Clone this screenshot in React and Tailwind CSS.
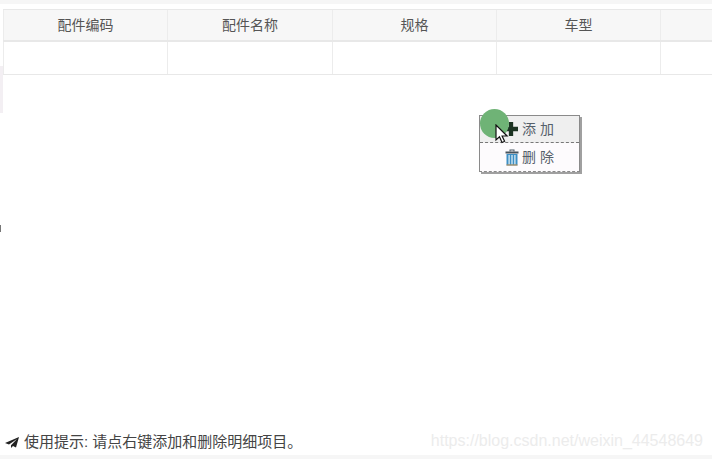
const columns = ["配件编码", "配件名称", "规格", "车型", ""];

function ContextMenu() {
  return (
    <div className="absolute left-[479px] top-[115px] w-[101px] h-[57px] border border-[#8a8a8a] [border-bottom-style:dashed] bg-[#fdfbfd] shadow-[2px_2px_0_#a0a0a0] text-[14px] text-[#55606a]">
      <div className="flex items-center h-[27px] pl-[24px] bg-[#efefef] border-b border-dashed border-[#777]">
        <svg className="w-[14px] h-[14px] mr-[4px]" viewBox="0 0 13 13">
          <path d="M4.500 0h4v4.500H13v4H8.500V13h-4V8.500H0v-4h4.500z" fill="#1c3322" />
        </svg>
        <span className="tracking-[4px]">添加</span>
      </div>
      <div className="flex items-center h-[28px] pl-[25px]">
        <svg className="w-[14px] h-[17px] mr-[3px]" viewBox="0 0 14 17">
          <path d="M4.500 0.500h5v2h-1v-1h-3v1h-1z" fill="#4a5a66" />
          <path d="M0.500 2.500h13v2h-13z" fill="#46535c" />
          <path d="M1.500 5h11v11.500h-11z" fill="#3d8fc4" />
          <path d="M3.500 6h1.200v9.500H3.500zM6.400 6h1.200v9.500H6.400zM9.300 6h1.200v9.500H9.300z" fill="#e9f3f8" />
          <path d="M1.500 15.500h11v1h-11z" fill="#c58a45" />
        </svg>
        <span className="tracking-[4px]">删除</span>
      </div>
    </div>
  );
}

function Cursor() {
  return (
    <>
      <div className="absolute left-[480px] top-[109px] w-[29px] h-[29px] rounded-full bg-[#6fb376]" />
      <svg className="absolute left-[495px] top-[124px] w-[15px] h-[20px]" viewBox="0 0 15 20">
        <path d="M1 1v15l3.500-3.200L7 18.500l2.600-1.200-2.500-5.300h5z" fill="#fff" stroke="#111" strokeWidth="1.200" />
      </svg>
    </>
  );
}

export default function App() {
  return (
    <div className="relative w-[712px] h-[459px] flex flex-col bg-white overflow-hidden font-['Liberation_Sans','Noto_Sans_CJK_SC',sans-serif] text-[#555]">
      <div className="h-[4px] bg-[#f6f6f6]" />
      <div className="flex-1 pt-[5px] pl-[3px]">
        <div className="grid grid-cols-[164px_165px_164px_164px_1fr] h-[33px] bg-[#f7f7f7] border-t border-b-2 border-[#e8e8e8] text-[14px]">
          {columns.map((c, i) => (
            <div key={i} className="flex items-center justify-center border-l border-[#ececec]">
              {c}
            </div>
          ))}
        </div>
        <div className="grid grid-cols-[164px_165px_164px_164px_1fr] h-[33px] border-b border-[#e8e8e8]">
          {columns.map((c, i) => (
            <div key={i} className="border-l border-[#ececec]" />
          ))}
        </div>
      </div>
      <div className="flex items-center justify-between h-[28px] pl-[5px] pr-[9px] text-[#444]">
        <div className="flex items-center gap-[5px] mt-[2px] text-[15px]">
          <svg className="w-[14px] h-[11px]" viewBox="0 0 14 11">
            <path d="M14 0 0 6l4 1.500L12 2 6 8.200V11l2-2 3 1.500z" fill="#222" />
          </svg>
          <span>使用提示: 请点右键添加和删除明细项目。</span>
        </div>
        <span className="text-[#ececec] text-[16px] font-['Liberation_Sans',sans-serif]">https://blog.csdn.net/weixin_44548649</span>
      </div>
      <div className="h-[4px] bg-[#f6f6f6]" />
      <div className="absolute left-0 top-[66px] w-[3px] h-[47px] bg-[#f3eff3]" />
      <div className="absolute left-0 top-[225px] w-[1px] h-[7px] bg-[#777]" />
      <ContextMenu />
      <Cursor />
    </div>
  );
}
